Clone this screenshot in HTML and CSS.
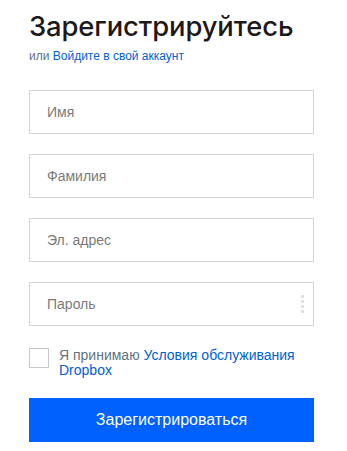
FILE: index.html
```html
<!DOCTYPE html>
<html lang="ru">
<head>
    <meta charset="UTF-8">
    <meta name="viewport" content="width=device-width, initial-scale=1.0">
    <title>Регистрация</title>
    <link rel="stylesheet" href="styles.css">
</head>
<body>
    <div class="signup">
        <h1 class="signup-title">Зарегистрируйтесь</h1>
        <div class="signup-sub">или <a href="#">Войдите в свой аккаунт</a></div>

        <form class="signup-form">
            <input class="field" type="text" placeholder="Имя">
            <input class="field" type="text" placeholder="Фамилия">
            <input class="field" type="email" placeholder="Эл. адрес">
            <div class="field-wrap">
                <input class="field" type="password" placeholder="Пароль">
                <span class="field-dots"><i></i><i></i><i></i><i></i></span>
            </div>

            <label class="terms">
                <input class="terms-box" type="checkbox">
                <span class="terms-text">
                    <span class="terms-line">Я принимаю <a href="#">Условия обслуживания</a></span>
                    <a class="terms-line" href="#">Dropbox</a>
                </span>
            </label>

            <button class="submit" type="submit">Зарегистрироваться</button>
        </form>
    </div>
</body>
</html>
```

FILE: styles.css
```css
body {
    margin: 0;
    background: #fff;
    font-family: "Liberation Sans", Arial, sans-serif;
    color: #1e1919;
}

.signup {
    width: 285px;
    padding: 10px 0 0 29px;
}

.signup-title {
    margin: 0;
    font-family: Inter, "Noto Sans", sans-serif;
    font-size: 27.4px;
    font-weight: 500;
    line-height: 32px;
    letter-spacing: -0.1px;
    color: #1e1919;
}

.signup-sub {
    margin-top: 6px;
    font-size: 12px;
    line-height: 16px;
    color: #637282;
}

.signup-sub a,
.terms-text a {
    color: #0061d5;
    text-decoration: none;
}

.signup-form {
    display: flex;
    flex-direction: column;
    gap: 20px;
    margin-top: 26px;
}

.field-wrap {
    position: relative;
}

.field {
    box-sizing: border-box;
    width: 285px;
    height: 44px;
    margin: 0;
    padding: 0 17px;
    border: 1px solid #d5d5d5;
    border-radius: 0;
    font-family: inherit;
    font-size: 14px;
    color: #1e1919;
    outline: none;
}

.field::placeholder {
    color: #7a7a7a;
}

.field-dots {
    position: absolute;
    right: 10px;
    top: 13px;
    display: flex;
    flex-direction: column;
    gap: 2px;
}

.field-dots i {
    width: 3px;
    height: 3px;
    background: #dfe3e8;
}

.terms {
    display: flex;
    align-items: flex-start;
    gap: 10px;
    margin-top: 2px;
}

.terms-box {
    appearance: none;
    box-sizing: border-box;
    width: 20px;
    height: 20px;
    margin: 0;
    border: 1px solid #c9c9c9;
    background: #fff;
    flex: none;
}

.terms-text {
    display: flex;
    flex-direction: column;
    align-items: flex-start;
    font-size: 14px;
    line-height: 15px;
    color: #637282;
}

.submit {
    width: 285px;
    height: 44px;
    margin-top: 0;
    border: none;
    background: #0061fe;
    color: #fff;
    font-family: inherit;
    font-size: 16px;
    cursor: pointer;
}
```
